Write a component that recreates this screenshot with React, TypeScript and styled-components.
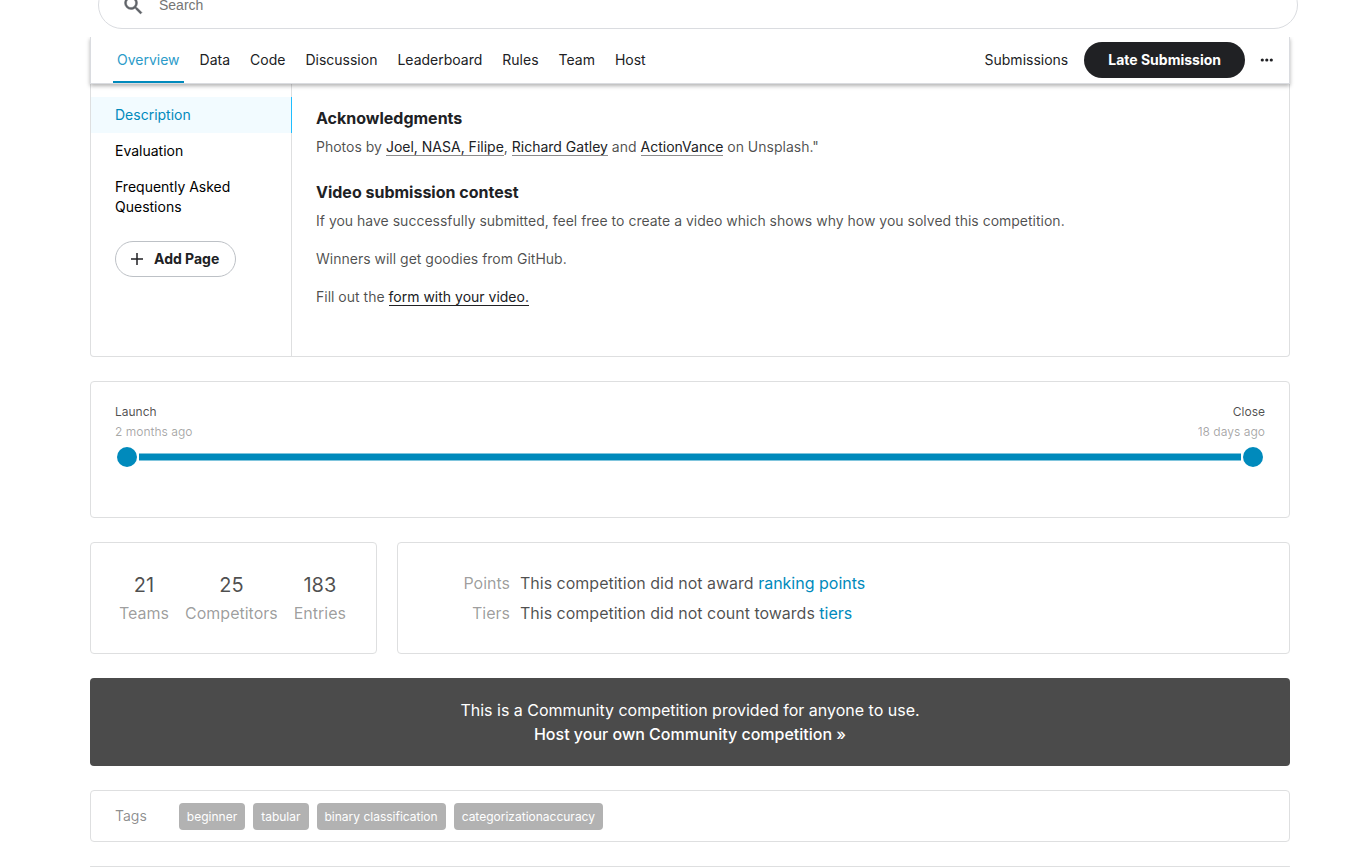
import React from "react";
import styled, { createGlobalStyle } from "styled-components";

const GlobalStyle = createGlobalStyle`
  *, *::before, *::after { box-sizing: border-box; }
  body {
    margin: 0;
    background: #fff;
    color: #202124;
    font-family: Inter, "Liberation Sans", sans-serif;
    font-size: 14px;
    line-height: 20px;
  }
  h3, p, ul, dl, dd { margin: 0; padding: 0; }
  ul { list-style: none; }
  a { color: inherit; text-decoration: none; }
  button { font: inherit; cursor: pointer; }
`;

const Page = styled.div`
  display: flex;
  flex-direction: column;
  min-height: 100vh;
`;

const Header = styled.header`
  position: relative;
  z-index: 2;
  display: flex;
  align-items: flex-end;
  height: 37px;
  padding: 0 65px 8px 98px;
  background: #fff;
  overflow: hidden;
`;

const SearchBox = styled.label`
  display: flex;
  flex: 1;
  align-items: center;
  gap: 12px;
  height: 48px;
  padding: 0 22px;
  border: 1px solid #dadce0;
  border-radius: 24px;
  color: #5f6368;
`;

const SearchInput = styled.input`
  flex: 1;
  border: 0;
  outline: 0;
  background: transparent;
  font-family: "Liberation Sans", Arial, sans-serif;
  font-size: 14px;
  &::placeholder { color: #757575; opacity: 1; }
`;

const Content = styled.main`
  display: flex;
  flex: 1;
  flex-direction: column;
  gap: 24px;
  padding: 0 73px 0 90px;
`;

const NavBar = styled.nav`
  position: relative;
  z-index: 1;
  display: flex;
  align-items: center;
  justify-content: space-between;
  height: 47px;
  padding: 0 14px 0 22px;
  border: 1px solid #dadce0;
  border-top: 0;
  background: #fff;
  box-shadow: 0 2px 4px rgba(0, 0, 0, 0.3);
`;

const TabList = styled.ul`
  display: flex;
  gap: 12px;
  height: 100%;
`;

const Tab = styled.a<{ $active?: boolean }>`
  display: flex;
  align-items: center;
  height: 100%;
  padding: 2px 4px 0;
  border-bottom: 2px solid ${(p) => (p.$active ? "#008abc" : "transparent")};
  color: ${(p) => (p.$active ? "#2c9bc9" : "#202124")};
`;

const NavActions = styled.div`
  display: flex;
  align-items: center;
  gap: 16px;
`;

const NavLink = styled.a`
  color: #202124;
`;

const PrimaryButton = styled.button`
  height: 36px;
  padding: 0 24px;
  border: 0;
  border-radius: 18px;
  background: #202124;
  color: #fff;
  font-weight: 700;
`;

const MoreButton = styled.button`
  display: flex;
  margin-left: -2px;
  padding: 0;
  border: 0;
  background: none;
  color: #202124;
`;

const Card = styled.section`
  border: 1px solid #dedfe0;
  border-radius: 4px;
  background: #fff;
`;

const OverviewCard = styled(Card)`
  display: flex;
  border-top: 0;
  border-top-left-radius: 0;
  border-top-right-radius: 0;
`;

const Sidebar = styled.aside`
  flex: none;
  width: 201px;
  padding: 13px 0 79px;
  box-shadow: inset -1px 0 #dedfe0;
`;

const SideLink = styled.a<{ $active?: boolean }>`
  display: block;
  padding: 8px 24px;
  border-right: 1px solid ${(p) => (p.$active ? "#20beff" : "transparent")};
  background: ${(p) => (p.$active ? "#f2fbff" : "transparent")};
  background-clip: padding-box;
  color: ${(p) => (p.$active ? "#008abc" : "#000")};
`;

const AddButton = styled.button`
  display: flex;
  align-items: center;
  gap: 8px;
  height: 36px;
  margin: 16px 24px 0;
  padding: 0 16px 0 12px;
  border: 1px solid #bdc1c6;
  border-radius: 18px;
  background: #fff;
  color: #202124;
  font-weight: 700;
`;

const Article = styled.article`
  flex: 1;
  padding: 24px;
  color: rgba(0, 0, 0, 0.7);
`;

const Heading = styled.h3`
  margin-bottom: 9px;
  color: #202124;
  font-size: 16px;
  font-weight: 700;
  line-height: 20px;
`;

const Paragraph = styled.p`
  margin-bottom: 18px;
`;

const Block = styled.div`
  margin-bottom: 25px;
`;

const TextLink = styled.a<{ $strong?: boolean }>`
  border-bottom: 1px solid ${(p) => (p.$strong ? "#202124" : "#8c8c8c")};
  color: #202124;
`;

const TimelineCard = styled(Card)`
  padding: 20px 24px 50px;
`;

const TimelineLabels = styled.div`
  display: flex;
  justify-content: space-between;
  font-size: 12px;
`;

const Milestone = styled.div<{ $end?: boolean }>`
  text-align: ${(p) => (p.$end ? "right" : "left")};
  color: rgba(0, 0, 0, 0.7);
`;

const MilestoneDate = styled.div`
  color: rgba(0, 0, 0, 0.35);
`;

const Track = styled.div`
  display: flex;
  align-items: center;
  gap: 2px;
  height: 20px;
  margin-top: 5px;
  padding: 0 2px;
`;

const Dot = styled.span`
  width: 20px;
  height: 20px;
  border-radius: 50%;
  background: #008abc;
`;

const Line = styled.span`
  flex: 1;
  height: 8px;
  border: solid #80c5dd;
  border-width: 1px 0;
  background: #008abc;
`;

const Row = styled.div`
  display: flex;
  gap: 20px;
`;

const StatsCard = styled(Card)`
  display: flex;
  flex: none;
  align-items: center;
  justify-content: center;
  gap: 16px;
  width: 287px;
  height: 112px;
  padding: 2px 2px 0 0;
`;

const Stat = styled.div`
  color: rgba(0, 0, 0, 0.4);
  font-size: 16px;
  line-height: 28px;
  text-align: center;
`;

const StatValue = styled.div`
  color: rgba(0, 0, 0, 0.7);
  font-size: 20px;
`;

const AwardCard = styled(Card)`
  display: flex;
  flex: 1;
  align-items: center;
  padding: 0 24px;
`;

const AwardList = styled.dl`
  display: grid;
  grid-template-columns: 88px 1fr;
  column-gap: 10px;
  color: rgba(0, 0, 0, 0.7);
  font-size: 16px;
  line-height: 30px;
`;

const AwardTerm = styled.dt`
  color: rgba(0, 0, 0, 0.4);
  text-align: right;
`;

const BlueLink = styled.a`
  color: #008abc;
`;

const Banner = styled.section`
  display: flex;
  flex-direction: column;
  align-items: center;
  padding: 20px;
  border-radius: 4px;
  background: #4b4b4b;
  color: #fff;
  font-size: 16px;
  line-height: 24px;
`;

const BannerLink = styled.a`
  font-weight: 500;
`;

const TagsCard = styled(Card)`
  display: flex;
  align-items: center;
  gap: 32px;
  height: 52px;
  padding: 0 24px;
`;

const TagsTitle = styled.span`
  color: rgba(0, 0, 0, 0.45);
`;

const TagList = styled.ul`
  display: flex;
  gap: 8px;
`;

const Tag = styled.a`
  display: block;
  padding: 4px 8px;
  border-radius: 4px;
  background: #b2b2b2;
  color: #fff;
  font-size: 12px;
  line-height: 19px;
`;

const NextCard = styled(Card)`
  flex: 1;
  border-bottom: 0;
  border-bottom-left-radius: 0;
  border-bottom-right-radius: 0;
`;

const tabs = ["Overview", "Data", "Code", "Discussion", "Leaderboard", "Rules", "Team", "Host"];
const pages = ["Description", "Evaluation", "Frequently Asked Questions"];
const stats = [
  { value: 21, label: "Teams" },
  { value: 25, label: "Competitors" },
  { value: 183, label: "Entries" },
];
const tags = ["beginner", "tabular", "binary classification", "categorizationaccuracy"];

export default function App() {
  return (
    <Page>
      <GlobalStyle />
      <Header>
        <SearchBox>
          <svg width="24" height="24" viewBox="0 0 24 24" fill="currentColor" stroke="currentColor" strokeWidth="0.4" aria-hidden="true">
            <path d="M16 14.5h-.79l-.28-.27A6.47 6.47 0 0 0 16.5 10 6.5 6.5 0 1 0 10 16.5c1.61 0 3.09-.59 4.23-1.57l.27.28v.79l5 4.99L20.99 19.5l-4.99-5zm-6 0C7.51 14.5 5.5 12.49 5.5 10S7.51 5.5 10 5.5 14.5 7.51 14.5 10 12.49 14.5 10 14.5z" />
          </svg>
          <SearchInput type="text" placeholder="Search" aria-label="Search" />
        </SearchBox>
      </Header>
      <Content>
        <div>
          <NavBar>
            <TabList>
              {tabs.map((name, i) => (
                <li key={name}>
                  <Tab href="#" $active={i === 0}>{name}</Tab>
                </li>
              ))}
            </TabList>
            <NavActions>
              <NavLink href="#">Submissions</NavLink>
              <PrimaryButton type="button">Late Submission</PrimaryButton>
              <MoreButton type="button" aria-label="More options">
                <svg width="16" height="16" viewBox="0 0 16 16" fill="currentColor" aria-hidden="true">
                  <circle cx="3.3" cy="8" r="1.6" />
                  <circle cx="7.8" cy="8" r="1.6" />
                  <circle cx="12.3" cy="8" r="1.6" />
                </svg>
              </MoreButton>
            </NavActions>
          </NavBar>
          <OverviewCard>
            <Sidebar>
              {pages.map((name, i) => (
                <SideLink key={name} href="#" $active={i === 0}>{name}</SideLink>
              ))}
              <AddButton type="button">
                <svg width="18" height="18" viewBox="0 0 18 18" fill="none" stroke="currentColor" strokeWidth="1.5" aria-hidden="true">
                  <path d="M9 3v12M3 9h12" />
                </svg>
                Add Page
              </AddButton>
            </Sidebar>
            <Article>
              <Block>
                <Heading>Acknowledgments</Heading>
                <p>
                  Photos by <TextLink href="#">Joel, NASA, Filipe</TextLink>,{" "}
                  <TextLink href="#">Richard Gatley</TextLink> and{" "}
                  <TextLink href="#">ActionVance</TextLink> on Unsplash."
                </p>
              </Block>
              <Heading>Video submission contest</Heading>
              <Paragraph>
                If you have successfully submitted, feel free to create a video which shows why how you solved this competition.
              </Paragraph>
              <Paragraph>Winners will get goodies from GitHub.</Paragraph>
              <p>
                Fill out the <TextLink href="#" $strong>form with your video.</TextLink>
              </p>
            </Article>
          </OverviewCard>
        </div>
        <TimelineCard>
          <TimelineLabels>
            <Milestone>
              Launch
              <MilestoneDate>2 months ago</MilestoneDate>
            </Milestone>
            <Milestone $end>
              Close
              <MilestoneDate>18 days ago</MilestoneDate>
            </Milestone>
          </TimelineLabels>
          <Track>
            <Dot />
            <Line />
            <Dot />
          </Track>
        </TimelineCard>
        <Row>
          <StatsCard>
            {stats.map((s) => (
              <Stat key={s.label}>
                <StatValue>{s.value}</StatValue>
                {s.label}
              </Stat>
            ))}
          </StatsCard>
          <AwardCard>
            <AwardList>
              <AwardTerm>Points</AwardTerm>
              <dd>This competition did not award <BlueLink href="#">ranking points</BlueLink></dd>
              <AwardTerm>Tiers</AwardTerm>
              <dd>This competition did not count towards <BlueLink href="#">tiers</BlueLink></dd>
            </AwardList>
          </AwardCard>
        </Row>
        <Banner>
          <p>This is a Community competition provided for anyone to use.</p>
          <BannerLink href="#">Host your own Community competition »</BannerLink>
        </Banner>
        <TagsCard>
          <TagsTitle>Tags</TagsTitle>
          <TagList>
            {tags.map((t) => (
              <li key={t}>
                <Tag href="#">{t}</Tag>
              </li>
            ))}
          </TagList>
        </TagsCard>
        <NextCard />
      </Content>
    </Page>
  );
}
